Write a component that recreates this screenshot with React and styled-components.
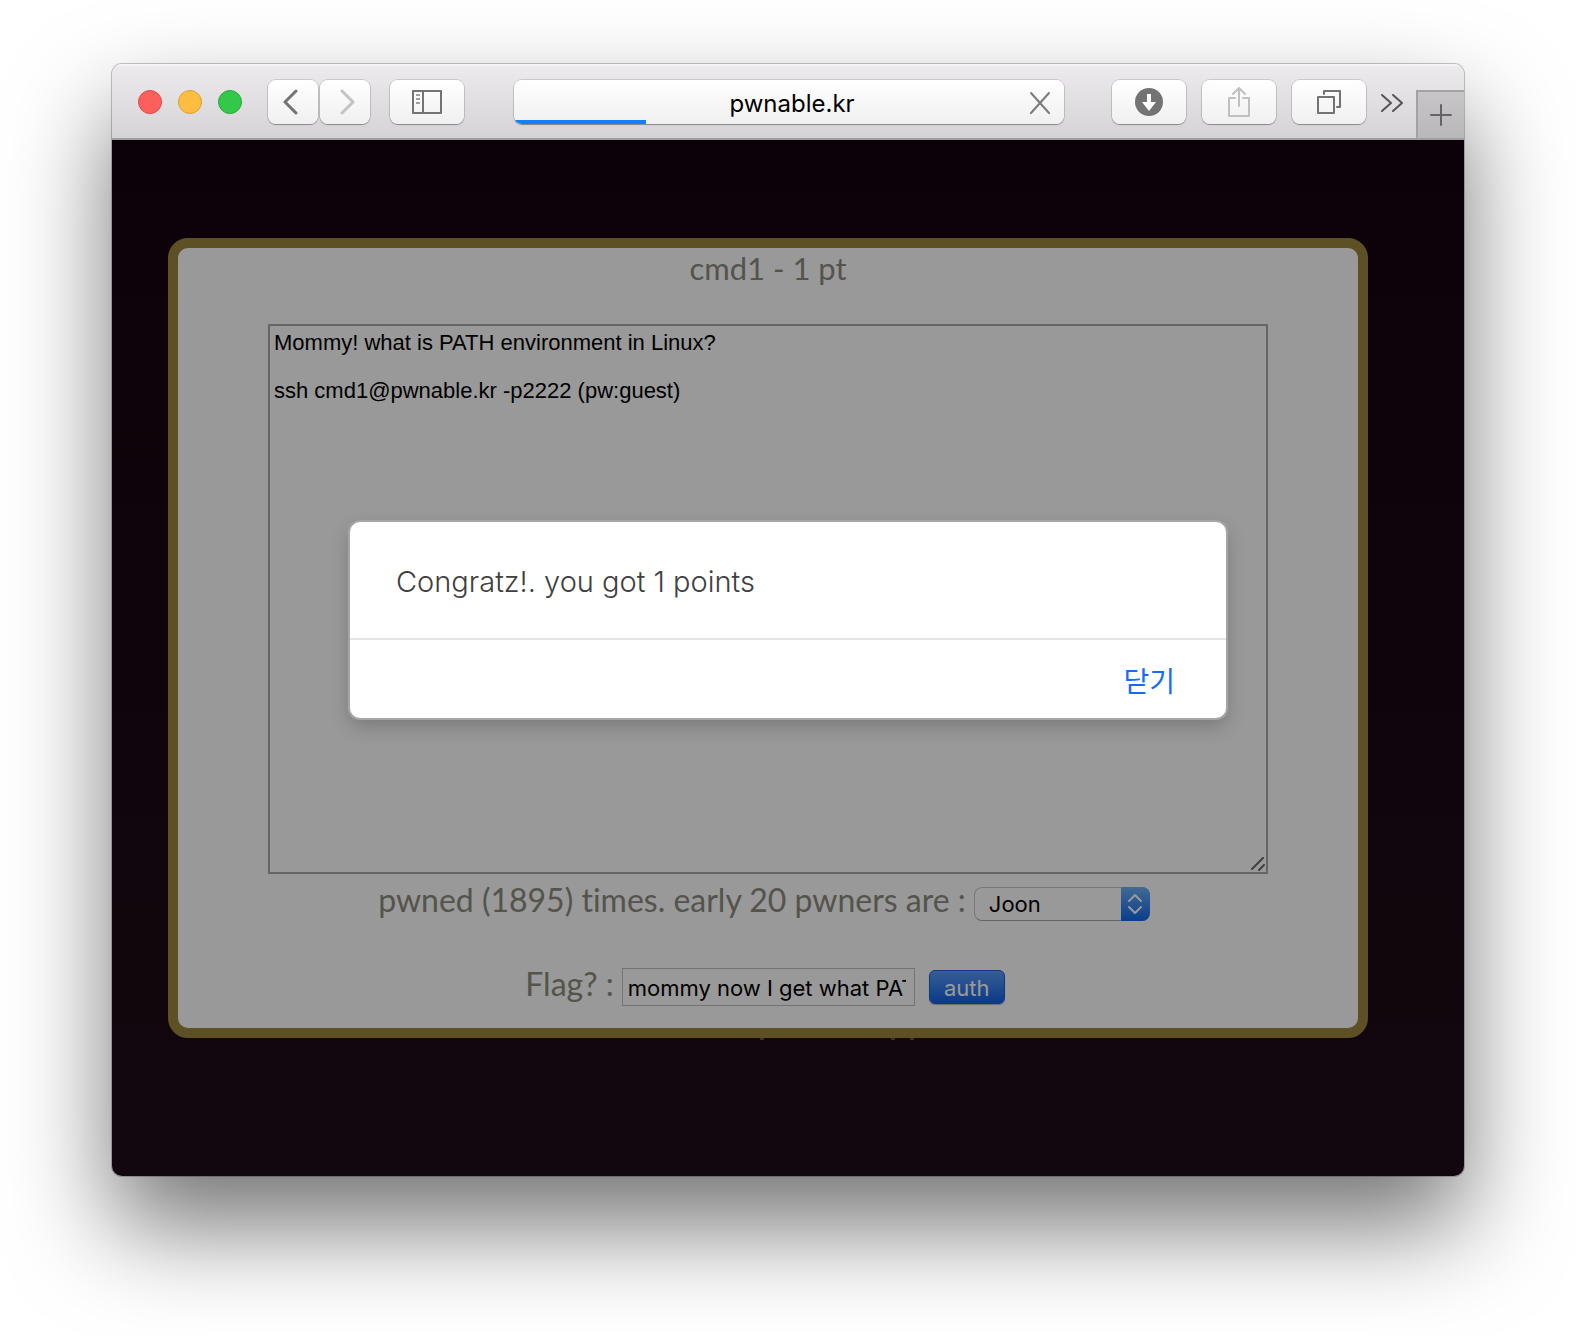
import React from "react";
import styled, { createGlobalStyle } from "styled-components";

const uiFont = `Inter, "Noto Sans CJK KR", "Liberation Sans", sans-serif`;
const siteFont = `Lato, "Liberation Sans", sans-serif`;

const GlobalStyle = createGlobalStyle`
  *, *::before, *::after { box-sizing: border-box; }
  body { margin: 0; background: #fff; }
  button, input, select, textarea { margin: 0; }
`;

const Desktop = styled.div`
  padding: 64px 112px 160px;
  overflow: hidden;
`;

const BrowserWindow = styled.div`
  border-radius: 10px;
  overflow: hidden;
  box-shadow: 0 0 0 1px rgba(0, 0, 0, 0.22), 0 50px 100px rgba(0, 0, 0, 0.55);
`;

const Toolbar = styled.header`
  display: flex;
  align-items: center;
  height: 76px;
  padding: 2px 0 0 26px;
  border-bottom: 2px solid #a09fa0;
  background: linear-gradient(#edebee, #d5d3d6);
  box-shadow: inset 0 2px 0 #f6f5f6;
`;

const Lights = styled.div`
  display: flex;
  gap: 16px;
  margin-right: 26px;
`;

const Light = styled.button`
  width: 24px;
  height: 24px;
  padding: 0;
  border: 1px solid ${(p) => p.$edge};
  border-radius: 50%;
  background: ${(p) => p.$fill};
`;

const Group = styled.div`
  display: flex;
  gap: ${(p) => p.$gap}px;
`;

const ToolButton = styled.button`
  display: flex;
  align-items: center;
  justify-content: center;
  width: ${(p) => (p.$narrow ? 50 : 74)}px;
  height: 44px;
  padding: 0;
  border: 0;
  border-radius: 8px;
  background: linear-gradient(#ffffff, #f1f0f1);
  box-shadow: 0 0 0 1px rgba(0, 0, 0, 0.13), 0 1px 1px rgba(0, 0, 0, 0.28);
`;

const SidebarSlot = styled.div`
  margin: 0 50px 0 20px;
`;

const AddressFrame = styled.div`
  display: flex;
  flex: 1;
  min-width: 0;
  margin-right: 48px;
  border-radius: 8px;
  box-shadow: 0 0 0 1px rgba(0, 0, 0, 0.13), 0 1px 1px rgba(0, 0, 0, 0.28);
`;

const AddressBar = styled.div`
  position: relative;
  display: flex;
  flex: 1;
  align-items: center;
  min-width: 0;
  height: 44px;
  padding-right: 12px;
  border-radius: 8px;
  overflow: hidden;
  background: linear-gradient(#ffffff, #f1f0f1);
`;

const AddressInput = styled.input`
  flex: 1;
  min-width: 0;
  height: 44px;
  padding: 2px 0 0 42px;
  border: 0;
  outline: 0;
  background: transparent;
  color: #000;
  font: 24px/32px ${uiFont};
  text-align: center;
`;

const LoadProgress = styled.div`
  position: absolute;
  bottom: 0;
  left: 0;
  width: 24%;
  height: 4px;
  background: #157efb;
`;

const IconButton = styled.button`
  display: flex;
  padding: 0;
  border: 0;
  background: transparent;
`;

const OverflowSlot = styled.div`
  margin: 0 12px 0 14px;
`;

const NewTab = styled.button`
  display: flex;
  align-items: center;
  justify-content: center;
  align-self: flex-end;
  width: 48px;
  height: 48px;
  padding: 0;
  border: solid #a3a1a4;
  border-width: 2px 0 0 2px;
  background: linear-gradient(#c7c5c8, #b9b7ba);
`;

const Page = styled.main`
  position: relative;
  padding: 98px 96px 136px 56px;
  background: linear-gradient(#160310, #200d19);
`;

const Card = styled.section`
  display: flex;
  flex-direction: column;
  align-items: center;
  padding-bottom: 22px;
  border: 10px solid #99853c;
  border-radius: 20px;
  background: #fff;
  color: #8c8c80;
  font: 32px/40px ${siteFont};
  font-variant-ligatures: none;
`;

const Title = styled.h1`
  margin: 0 0 36px;
  font-size: 31px;
  font-weight: 400;
  line-height: 40px;
`;

const DescriptionFrame = styled.div`
  position: relative;
  display: flex;
  width: 1000px;
  max-width: 100%;
`;

const Description = styled.textarea`
  width: 100%;
  height: 550px;
  padding: 5px 4px;
  border: 2px solid #aaa;
  outline: 0;
  resize: none;
  background: #fff;
  color: #000;
  font: 22px/24px "Liberation Sans", sans-serif;
`;

const ResizeGrip = styled.svg`
  position: absolute;
  right: 3px;
  bottom: 3px;
`;

const PwnersRow = styled.div`
  display: flex;
  align-items: baseline;
  gap: 8px;
  margin: 6px 8px 47px 0;
`;

const FlagForm = styled.form`
  display: flex;
  align-items: center;
  gap: 14px;
  margin-right: 6px;
`;

const FlagLabel = styled.label`
  display: flex;
  align-items: baseline;
  gap: 8px;
  line-height: 30px;
`;

const FlagInput = styled.input`
  width: 293px;
  height: 38px;
  padding: 2px 8px 0 5px;
  border: 1px solid #c0c0c0;
  outline: 0;
  background: #fff;
  color: #000;
  font: 22px/28px ${uiFont};
`;

const AuthButton = styled.button`
  width: 76px;
  height: 34px;
  padding: 2px 0 0;
  border: 1px solid #1a5fd8;
  border-radius: 6px;
  background: linear-gradient(#5a9cf8, #1360e4);
  box-shadow: 0 1px 1px rgba(0, 0, 0, 0.3);
  color: #fff;
  font: 22px/30px ${uiFont};
`;

const SelectFrame = styled.span`
  position: relative;
  display: inline-flex;
`;

const PwnerSelect = styled.select`
  width: 176px;
  height: 34px;
  padding: 0 40px 0 14px;
  border: 1px solid #c9c9c9;
  border-bottom-color: #aaa;
  border-radius: 8px;
  outline: 0;
  appearance: none;
  background: #fff;
  color: #000;
  font: 22px/32px ${uiFont};
`;

const Stepper = styled.span`
  position: absolute;
  top: 0;
  right: 0;
  display: flex;
  align-items: center;
  justify-content: center;
  width: 29px;
  height: 34px;
  border-radius: 0 8px 8px 0;
  background: linear-gradient(#6fb1f6, #1267ec);
  pointer-events: none;
`;

const CardEdgeMarks = styled.svg`
  display: block;
  margin: 0 auto;
`;

const Overlay = styled.div`
  position: absolute;
  inset: 0;
  display: flex;
  align-items: flex-start;
  justify-content: center;
  padding-top: 382px;
  background: rgba(0, 0, 0, 0.4);
`;

const Dialog = styled.div`
  width: 876px;
  max-width: 90%;
  border-radius: 10px;
  background: #fff;
  box-shadow: 0 0 0 2px #a6a6a6, 0 8px 20px rgba(0, 0, 0, 0.22);
`;

const Message = styled.p`
  margin: 0;
  padding: 40px 46px 36px;
  border-bottom: 2px solid #e4e4e4;
  color: #404040;
  font: 300 29px/40px ${uiFont};
`;

const DialogActions = styled.div`
  display: flex;
  justify-content: flex-end;
  padding: 20px 51px 18px;
`;

const CloseButton = styled.button`
  padding: 0;
  border: 0;
  background: transparent;
  color: #116cff;
  font: 28px/40px "Noto Sans CJK KR", sans-serif;
`;

const Stroke = ({ w, h, color = "#737373", width = 2, children }) => (
  <svg
    width={w}
    height={h}
    viewBox={`0 0 ${w} ${h}`}
    fill="none"
    stroke={color}
    strokeWidth={width}
    strokeLinecap="round"
    strokeLinejoin="round"
    aria-hidden="true"
  >
    {children}
  </svg>
);

export default function App() {
  return (
    <>
      <GlobalStyle />
      <Desktop>
        <BrowserWindow>
          <Toolbar>
            <Lights>
              <Light aria-label="Close window" $fill="#fd605c" $edge="#df4845" />
              <Light aria-label="Minimize" $fill="#fdbd40" $edge="#dd9f34" />
              <Light aria-label="Zoom" $fill="#34c84a" $edge="#27aa35" />
            </Lights>
            <Group $gap={2}>
              <ToolButton $narrow aria-label="Back">
                <Stroke w={20} h={26} width={3}>
                  <path d="M13 2 2 13l11 11" />
                </Stroke>
              </ToolButton>
              <ToolButton $narrow aria-label="Forward">
                <Stroke w={20} h={26} width={3} color="#c3c3c3">
                  <path d="M7 2l11 11L7 24" />
                </Stroke>
              </ToolButton>
            </Group>
            <SidebarSlot>
              <ToolButton aria-label="Sidebar">
                <Stroke w={30} h={24}>
                  <path d="M1 1h28v22H1zM11 1v22" />
                  <path d="M4 5h4M4 9h4M4 13h4" stroke="#a0a0a0" strokeLinecap="butt" />
                </Stroke>
              </ToolButton>
            </SidebarSlot>
            <AddressFrame>
              <AddressBar>
                <AddressInput aria-label="Address" defaultValue="pwnable.kr" />
                <IconButton aria-label="Stop loading">
                  <Stroke w={24} h={24} color="#7a7a7a">
                    <path d="M3 3l18 20M21 3 3 23" />
                  </Stroke>
                </IconButton>
                <LoadProgress />
              </AddressBar>
            </AddressFrame>
            <Group $gap={16}>
              <ToolButton aria-label="Downloads">
                <svg width="28" height="28" viewBox="0 0 28 28" aria-hidden="true">
                  <circle cx="14" cy="14" r="14" fill="#737373" />
                  <path d="M12 6h4v8h5l-7 9-7-9h5z" fill="#fff" />
                </svg>
              </ToolButton>
              <ToolButton aria-label="Share">
                <Stroke w={24} h={34} color="#c0c0c0">
                  <path d="M8 13H2v18h20V13h-6M12 21V3M6 9l6-6 6 6" />
                </Stroke>
              </ToolButton>
              <ToolButton aria-label="Show all tabs">
                <Stroke w={24} h={24}>
                  <path d="M1 7h16v16H1zM7 4V1h16v16h-3" />
                </Stroke>
              </ToolButton>
            </Group>
            <OverflowSlot>
              <IconButton aria-label="More tools">
                <Stroke w={24} h={20} color="#565458" width={2}>
                  <path d="M2 3l9 8-9 8M13 3l9 8-9 8" />
                </Stroke>
              </IconButton>
            </OverflowSlot>
            <NewTab aria-label="New tab">
              <Stroke w={24} h={24} color="#656367">
                <path d="M12 2v20M2 12h20" />
              </Stroke>
            </NewTab>
          </Toolbar>
          <Page>
            <Card>
              <Title>cmd1 - 1 pt</Title>
              <DescriptionFrame>
                <Description
                  aria-label="Challenge description"
                  readOnly
                  value={
                    "Mommy! what is PATH environment in Linux?\n\nssh cmd1@pwnable.kr -p2222 (pw:guest)"
                  }
                />
                <ResizeGrip width="14" height="14" viewBox="0 0 14 14" stroke="#6c6c6c" strokeWidth="2" strokeLinecap="round" aria-hidden="true">
                  <path d="M1 12 12 1M8 13l5-5" />
                </ResizeGrip>
              </DescriptionFrame>
              <PwnersRow>
                <label htmlFor="pwners">pwned (1895) times. early 20 pwners are :</label>
                <SelectFrame>
                  <PwnerSelect id="pwners" defaultValue="Joon">
                    <option>Joon</option>
                  </PwnerSelect>
                  <Stepper>
                    <Stroke w={14} h={20} color="#fff" width={2}>
                      <path d="M1 7l6-6 6 6M1 13l6 6 6-6" />
                    </Stroke>
                  </Stepper>
                </SelectFrame>
              </PwnersRow>
              <FlagForm onSubmit={(e) => e.preventDefault()}>
                <FlagLabel>
                  Flag? :
                  <FlagInput defaultValue="mommy now I get what PATH environment is for :)" />
                </FlagLabel>
                <AuthButton>auth</AuthButton>
              </FlagForm>
            </Card>
            <CardEdgeMarks width="300" height="2" viewBox="0 0 300 2" fill="#55555a" aria-hidden="true">
              <path d="M142 0h4v2h-4zM273 0h4v2h-4zM292 0h4v2h-4z" />
            </CardEdgeMarks>
            <Overlay>
              <Dialog role="alertdialog" aria-labelledby="message">
                <Message id="message">Congratz!. you got 1 points</Message>
                <DialogActions>
                  <CloseButton>닫기</CloseButton>
                </DialogActions>
              </Dialog>
            </Overlay>
          </Page>
        </BrowserWindow>
      </Desktop>
    </>
  );
}
